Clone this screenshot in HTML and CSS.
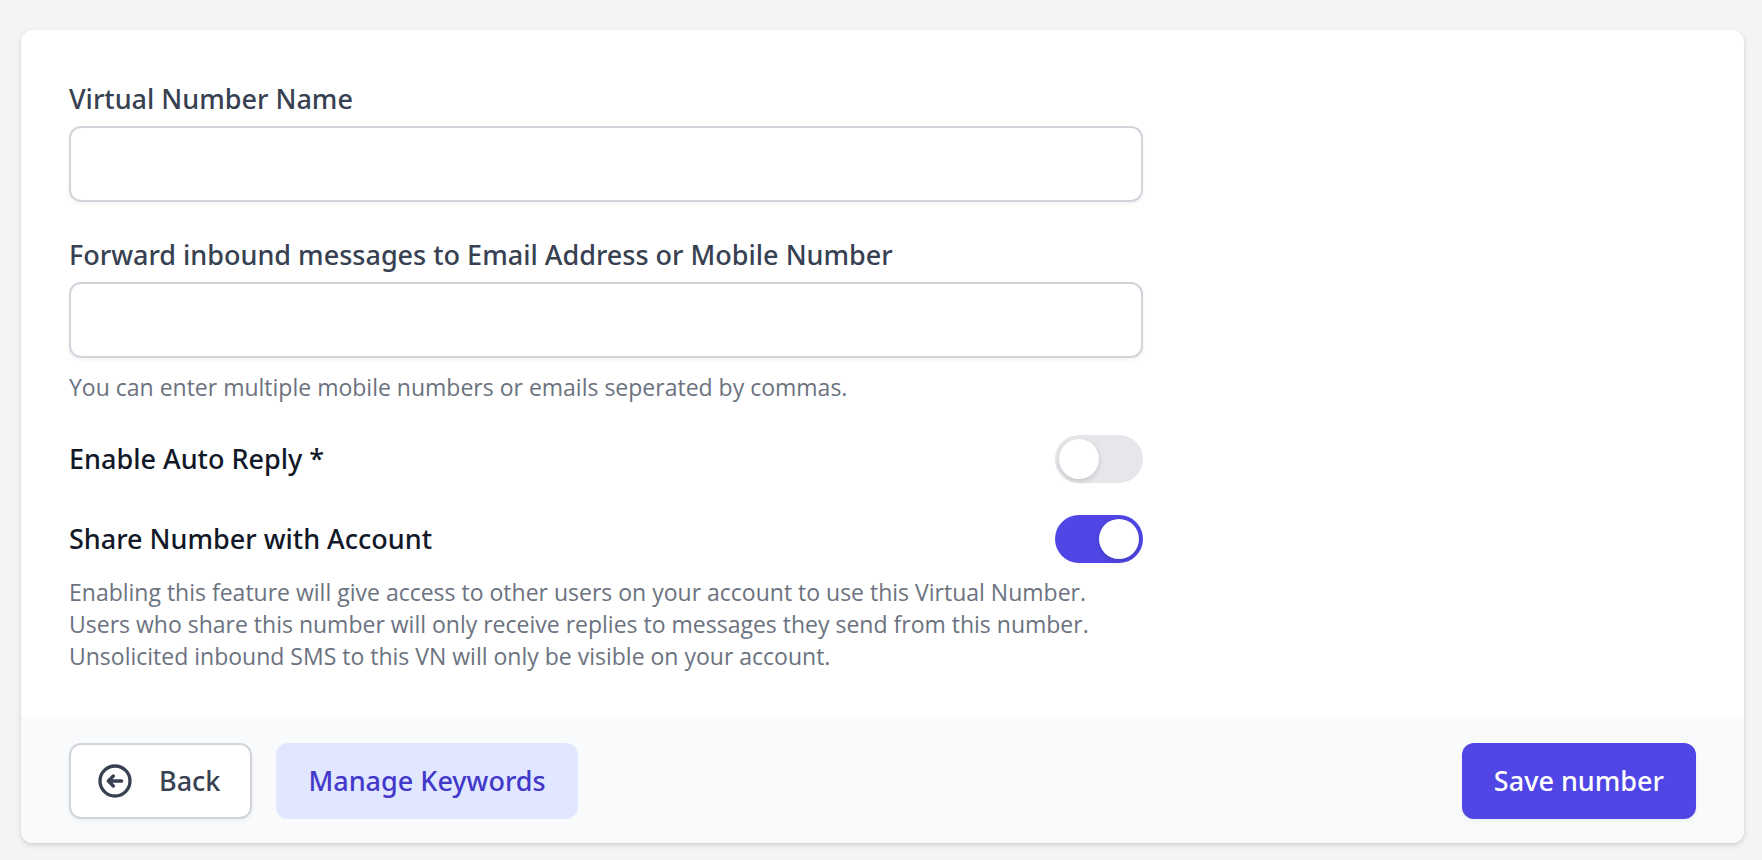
FILE: index.html
```
<!DOCTYPE html>
<html lang="en">
<head>
  <meta charset="UTF-8">
  <title>Edit Virtual Number</title>
  <meta name="viewport" content="width=device-width, initial-scale=1.0">
  <link rel="stylesheet" href="styles.css">
</head>
<body>

  <form class="card">
    <div class="card-body">
      <div class="fields">
        <div class="field">
          <label class="label" for="number-name">Virtual Number Name</label>
          <input class="input" type="text" id="number-name" name="name">
        </div>

        <div class="field">
          <label class="label" for="forward-to">Forward inbound messages to Email Address or Mobile Number</label>
          <input class="input" type="text" id="forward-to" name="forward_to" aria-describedby="forward-help">
          <p class="help" id="forward-help">You can enter multiple mobile numbers or emails seperated by commas.</p>
        </div>

        <div class="toggle-row">
          <label class="toggle-label" for="auto-reply">Enable Auto Reply *</label>
          <input class="toggle" type="checkbox" role="switch" id="auto-reply" name="auto_reply">
        </div>

        <div class="field">
          <div class="toggle-row">
            <label class="toggle-label" for="share-number">Share Number with Account</label>
            <input class="toggle" type="checkbox" role="switch" id="share-number" name="share" aria-describedby="share-help" checked>
          </div>
          <p class="help" id="share-help">
            Enabling this feature will give access to other users on your account to use this Virtual Number.<br>
            Users who share this number will only receive replies to messages they send from this number.<br>
            Unsolicited inbound SMS to this VN will only be visible on your account.
          </p>
        </div>
      </div>
    </div>

    <div class="card-footer">
      <button class="btn btn-back" type="button">
        <svg class="btn-icon" viewBox="0 0 24 24" fill="none" stroke="currentColor" stroke-width="2" stroke-linecap="round" stroke-linejoin="round" aria-hidden="true">
          <path d="M11 15l-3-3m0 0l3-3m-3 3h8M3 12a9 9 0 1118 0 9 9 0 01-18 0z"/>
        </svg>
        Back
      </button>
      <button class="btn btn-light" type="button">Manage Keywords</button>
      <button class="btn btn-primary" type="submit">Save number</button>
    </div>
  </form>

</body>
</html>
```
FILE: styles.css
```
* {
  box-sizing: border-box;
}

body {
  font-family: "Noto Sans", "Open Sans", sans-serif;
  margin: 0;
  padding: 30px 18px 17px 21px;
  background-color: #f3f4f6;
  color: #111827;
}

.card {
  background-color: white;
  border-radius: 12px;
  overflow: hidden;
  box-shadow: 0 2px 6px rgba(0, 0, 0, 0.1), 0 2px 4px rgba(0, 0, 0, 0.06);
}

.card-body {
  display: grid;
  grid-template-columns: repeat(3, minmax(0, 1fr));
  gap: 32px;
  padding: 48px 48px 45px;
}

.fields {
  grid-column: span 2;
  display: flex;
  flex-direction: column;
  gap: 32px;
}

.label,
.toggle-label {
  font-size: 27px;
  line-height: 42px;
  font-weight: 500;
}

.label {
  display: block;
  color: #374151;
}

.input {
  display: block;
  width: 100%;
  height: 76px;
  margin-top: 6px;
  padding: 16px 24px;
  font: inherit;
  font-size: 27px;
  color: #111827;
  background-color: white;
  border: 2px solid #d1d5db;
  border-radius: 12px;
  box-shadow: 0 2px 4px rgba(0, 0, 0, 0.05);
}

.help {
  font-family: "Open Sans", "Noto Sans", sans-serif;
  margin: 13px 0 0;
  font-size: 23px;
  line-height: 32px;
  color: #6b7280;
}

.toggle-row {
  display: flex;
  justify-content: space-between;
  align-items: center;
}

.toggle {
  appearance: none;
  display: flex;
  flex-shrink: 0;
  width: 88px;
  height: 48px;
  margin: 0;
  padding: 4px;
  background-color: #e5e7eb;
  border-radius: 24px;
  cursor: pointer;
}

.toggle::before {
  content: "";
  width: 40px;
  height: 40px;
  background-color: white;
  border-radius: 50%;
  box-shadow: 0 2px 6px rgba(0, 0, 0, 0.1), 0 2px 4px rgba(0, 0, 0, 0.06);
}

.toggle:checked {
  justify-content: flex-end;
  background-color: #4f46e5;
}

.card-footer {
  display: flex;
  gap: 24px;
  padding: 26px 48px 24px;
  background-color: #f9fafb;
}

.btn {
  display: flex;
  align-items: center;
  height: 76px;
  padding: 0 30px;
  font-family: inherit;
  font-size: 27px;
  line-height: 42px;
  font-weight: 500;
  border: 2px solid transparent;
  border-radius: 12px;
  cursor: pointer;
}

.btn-back {
  gap: 24px;
  padding-left: 24px;
  color: #374151;
  background-color: white;
  border-color: #d1d5db;
  box-shadow: 0 2px 4px rgba(0, 0, 0, 0.05);
}

.btn-icon {
  width: 40px;
  height: 40px;
}

.btn-light {
  color: #4338ca;
  background-color: #e0e7ff;
}

.btn-primary {
  margin-left: auto;
  color: white;
  background-color: #4f46e5;
  box-shadow: 0 2px 4px rgba(0, 0, 0, 0.05);
}
```
